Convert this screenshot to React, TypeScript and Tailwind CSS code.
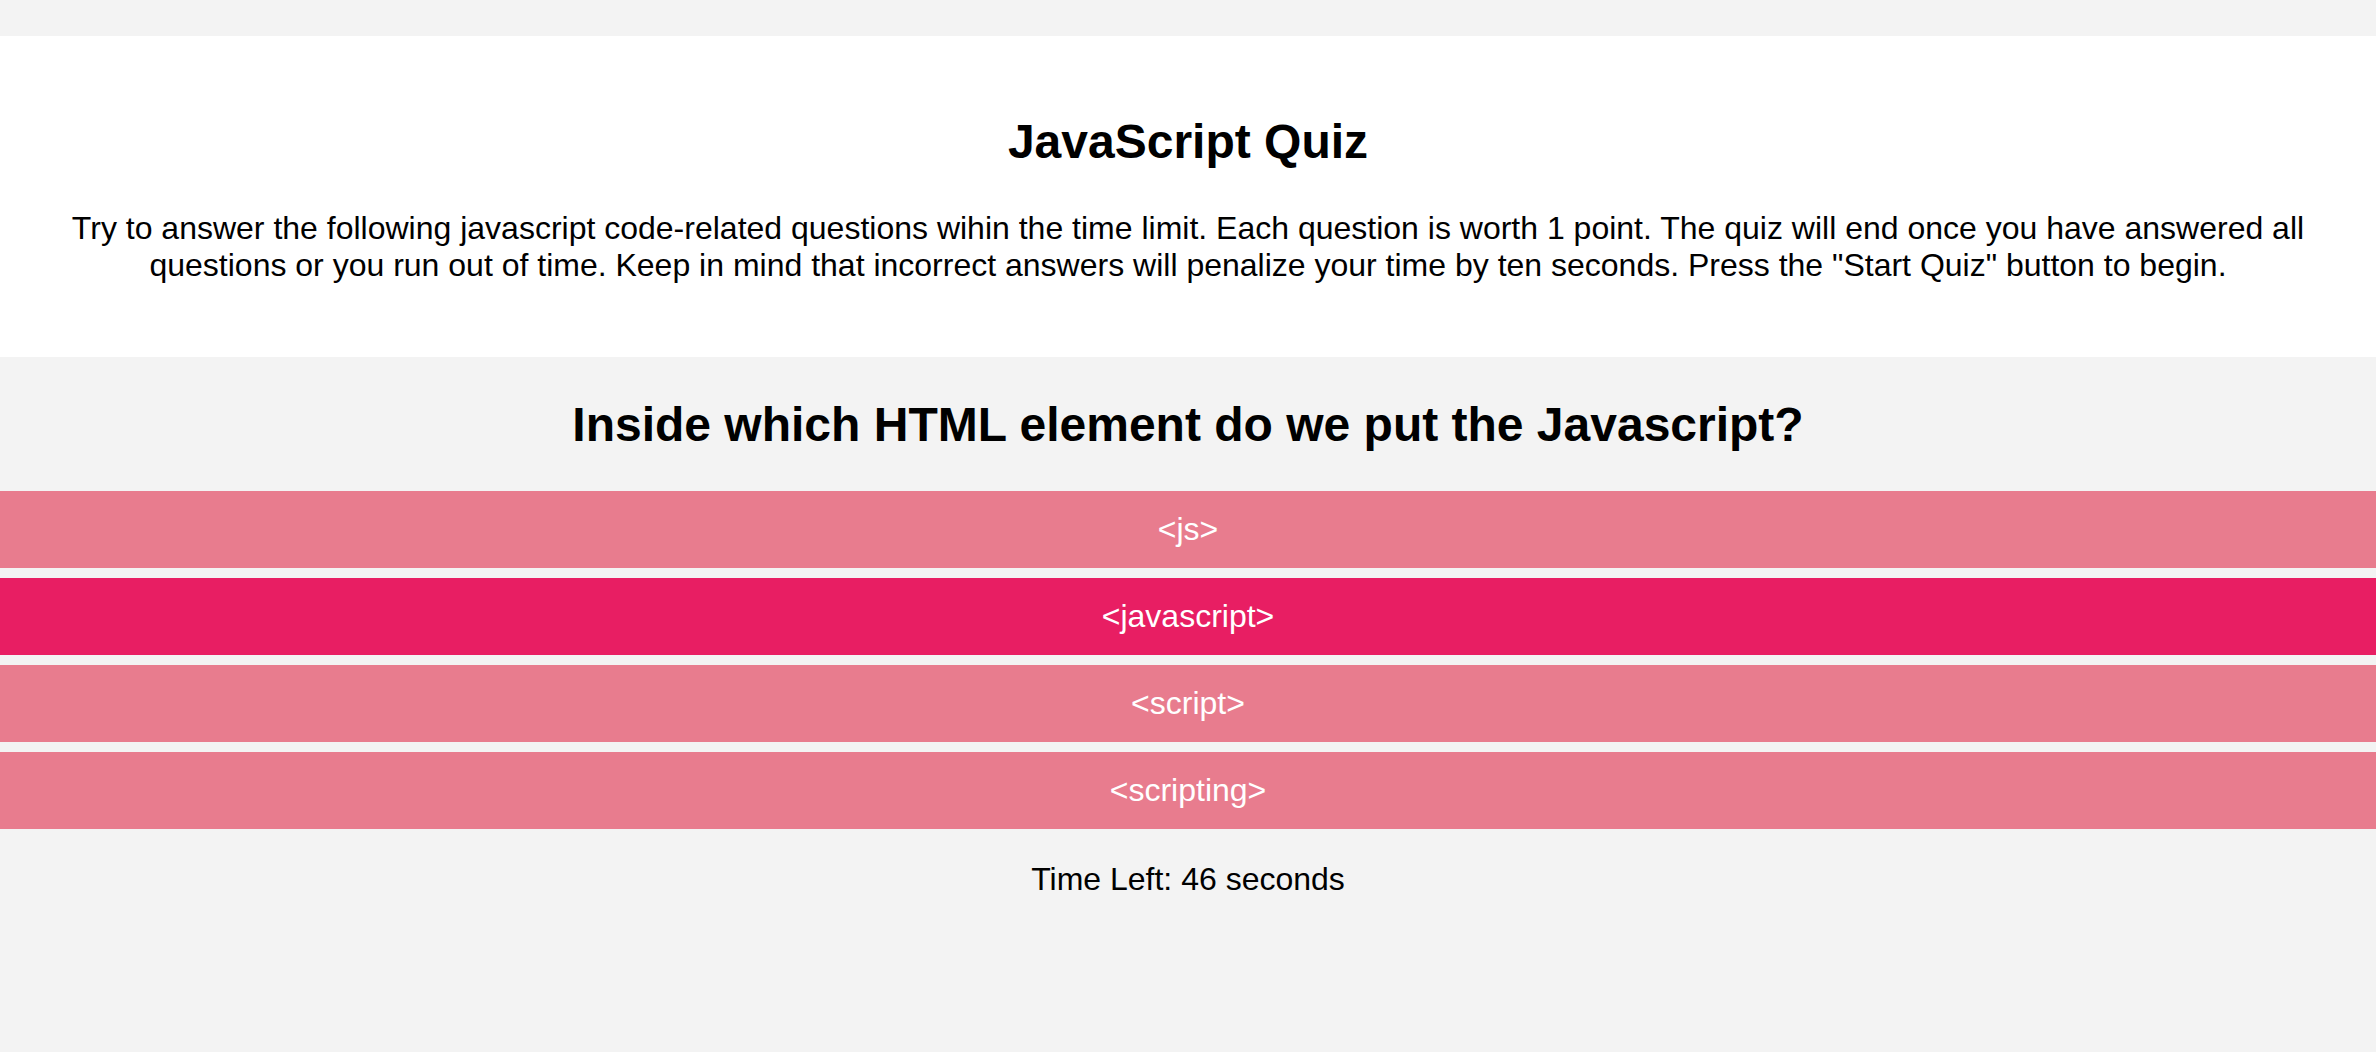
const answers = ["<js>", "<javascript>", "<script>", "<scripting>"];

export default function App() {
  const selected = 1;

  return (
    <div
      className="min-h-screen bg-[#f3f3f3] pt-[36px] text-black"
      style={{ fontFamily: '"Liberation Sans", Arial, Helvetica, sans-serif' }}
    >
      <header className="bg-white pt-[78px] pb-[73px] px-[40px] text-center">
        <h1 className="text-[48px] leading-[55px] font-bold">JavaScript Quiz</h1>
        <p className="mt-[41px] text-[32px] leading-[36.8px]">
          Try to answer the following javascript code-related questions wihin the time limit. Each question is
          worth 1 point. The quiz will end once you have answered all questions or you run out of time. Keep in
          mind that incorrect answers will penalize your time by ten seconds. Press the "Start Quiz" button to
          begin.
        </p>
      </header>

      <main className="pt-[40px] text-center">
        <h2 className="text-[48px] leading-[55px] font-bold">
          Inside which HTML element do we put the Javascript?
        </h2>
        <div className="mt-[39px] flex flex-col gap-[10px]">
          {answers.map((answer, index) => (
            <button
              key={index}
              className={
                index === selected
                  ? "h-[77px] w-full bg-[#e81e63] text-white text-[32px]"
                  : "h-[77px] w-full bg-[#e87c8e] text-white text-[32px]"
              }
            >
              {answer}
            </button>
          ))}
        </div>
        <div className="mt-[32px] text-[32px] leading-[36.8px]">Time Left: 46 seconds</div>
      </main>
    </div>
  );
}
